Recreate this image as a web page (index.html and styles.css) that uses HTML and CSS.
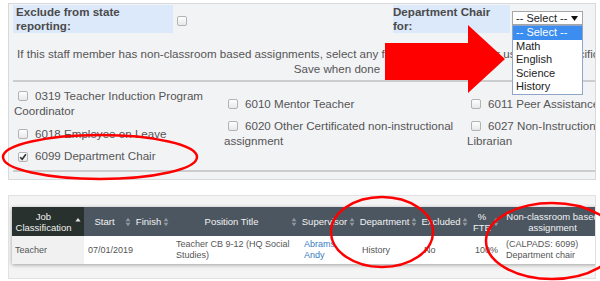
FILE: index.html
```html
<!DOCTYPE html>
<html>
<head>
<meta charset="utf-8">
<link rel="stylesheet" href="styles.css">
</head>
<body>
<div class="page">
  <section class="panel panel-top">
    <div class="panel-inner">
      <div class="form-row">
        <div class="lbl lbl-excl">Exclude from state reporting:</div>
        <div class="fld fld-excl"><span class="cb"></span></div>
        <div class="lbl lbl-dept">Department Chair for:</div>
        <div class="fld fld-dept">
          <div class="select"><span>-- Select --</span><svg class="caret" width="7" height="5" viewBox="0 0 7 5"><path d="M0 0H7L3.5 5Z" fill="#111"/></svg></div>
          <ul class="dropdown">
            <li class="active">-- Select --</li>
            <li>Math</li>
            <li>English</li>
            <li>Science</li>
            <li>History</li>
          </ul>
        </div>
      </div>
      <div class="info">
        <div class="info-l1">If this staff member has non-classroom based assignments, select any from the lists. Consider using their specific</div>
        <div class="info-l2">Save when done</div>
      </div>
      <div class="rule"></div>
      <div class="assign-grid">
        <div class="item"><span class="cb"></span>0319 Teacher Induction Program Coordinator</div>
        <div class="item"><span class="cb"></span>6010 Mentor Teacher</div>
        <div class="item"><span class="cb"></span>6011 Peer Assistance</div>
        <div class="item"><span class="cb"></span>6018 Employee on Leave</div>
        <div class="item"><span class="cb"></span>6020 Other Certificated non-instructional assignment</div>
        <div class="item"><span class="cb"></span>6027 Non-Instructional Librarian</div>
        <div class="item"><span class="cb checked"><svg width="8" height="8" viewBox="0 0 8 8"><path d="M1.2 4.2L3.2 6.3L6.9 1.2" fill="none" stroke="#333" stroke-width="1.6"/></svg></span>6099 Department Chair</div>
      </div>
      <div class="rule rule-bottom"></div>
    </div>
  </section>

  <section class="panel panel-table">
    <table class="grid-table">
      <colgroup>
        <col class="c-job"><col class="c-start"><col class="c-finish"><col class="c-pos"><col class="c-sup"><col class="c-dept"><col class="c-excl"><col class="c-fte"><col class="c-ncb">
      </colgroup>
      <thead>
        <tr>
          <th class="sorted"><div class="th-in"><span class="th-t">Job<br>Classification</span><svg class="si" width="6" height="10" viewBox="0 0 6 10"><path d="M3 1L5.6 4.4H0.4Z" fill="#e4e4e4"/></svg></div></th>
          <th><div class="th-in"><span class="th-t">Start</span><svg class="si" width="6" height="10" viewBox="0 0 6 10"><path d="M3 0.8L5.4 4.2H0.6Z" fill="#8e979f"/><path d="M3 9.2L5.4 5.8H0.6Z" fill="#8e979f"/></svg></div></th>
          <th><div class="th-in"><span class="th-t">Finish</span><svg class="si" width="6" height="10" viewBox="0 0 6 10"><path d="M3 0.8L5.4 4.2H0.6Z" fill="#8e979f"/><path d="M3 9.2L5.4 5.8H0.6Z" fill="#8e979f"/></svg></div></th>
          <th><div class="th-in"><span class="th-t">Position Title</span><svg class="si" width="6" height="10" viewBox="0 0 6 10"><path d="M3 0.8L5.4 4.2H0.6Z" fill="#8e979f"/><path d="M3 9.2L5.4 5.8H0.6Z" fill="#8e979f"/></svg></div></th>
          <th><div class="th-in"><span class="th-t">Supervisor</span><svg class="si" width="6" height="10" viewBox="0 0 6 10"><path d="M3 0.8L5.4 4.2H0.6Z" fill="#8e979f"/><path d="M3 9.2L5.4 5.8H0.6Z" fill="#8e979f"/></svg></div></th>
          <th><div class="th-in"><span class="th-t">Department</span><svg class="si" width="6" height="10" viewBox="0 0 6 10"><path d="M3 0.8L5.4 4.2H0.6Z" fill="#8e979f"/><path d="M3 9.2L5.4 5.8H0.6Z" fill="#8e979f"/></svg></div></th>
          <th><div class="th-in"><span class="th-t">Excluded</span><svg class="si" width="6" height="10" viewBox="0 0 6 10"><path d="M3 0.8L5.4 4.2H0.6Z" fill="#8e979f"/><path d="M3 9.2L5.4 5.8H0.6Z" fill="#8e979f"/></svg></div></th>
          <th><div class="th-in"><span class="th-t">% FTE</span><svg class="si" width="6" height="10" viewBox="0 0 6 10"><path d="M3 0.8L5.4 4.2H0.6Z" fill="#8e979f"/><path d="M3 9.2L5.4 5.8H0.6Z" fill="#8e979f"/></svg></div></th>
          <th><div class="th-in"><span class="th-t">Non-classroom based assignment</span><svg class="si" width="6" height="10" viewBox="0 0 6 10"><path d="M3 0.8L5.4 4.2H0.6Z" fill="#8e979f"/><path d="M3 9.2L5.4 5.8H0.6Z" fill="#8e979f"/></svg></div></th>
        </tr>
      </thead>
      <tbody>
        <tr>
          <td class="sorted">Teacher</td>
          <td>07/01/2019</td>
          <td></td>
          <td>Teacher CB 9-12 (HQ Social Studies)</td>
          <td><a class="sup-link" href="#">Abrams, Andy</a></td>
          <td>History</td>
          <td>No</td>
          <td>100%</td>
          <td>(CALPADS: 6099) Department chair</td>
        </tr>
      </tbody>
    </table>
  </section>

  <svg class="annot" width="600" height="281" viewBox="0 0 600 281">
    <polygon points="385,43 468,43 468,25 505,59 468,93 468,80 385,80" fill="#ff0000"/>
    <ellipse cx="100" cy="157" rx="97" ry="22" fill="none" stroke="#ff0000" stroke-width="2.5"/>
    <ellipse cx="382" cy="232" rx="51" ry="35" fill="none" stroke="#ff0000" stroke-width="2.5"/>
    <ellipse cx="552" cy="241" rx="66" ry="38" fill="none" stroke="#ff0000" stroke-width="2.5"/>
  </svg>
</div>
</body>
</html>
```

FILE: styles.css
```css
* { box-sizing: border-box; }
html, body { margin: 0; padding: 0; background: #fff; }
body {
  font-family: "Liberation Sans", Arial, sans-serif;
  width: 600px;
  height: 281px;
  overflow: hidden;
}
.page { position: relative; padding: 3px 0 0 8px; }
.panel { width: 588px; overflow: hidden; }

/* top panel */
.panel-top {
  border: 1px solid #d8d9db;
  background: #f2f3f5;
  padding: 1px 0 7px 4px;
}
.panel-inner { width: 648px; }
.form-row { display: flex; align-items: flex-start; height: 28px; }
.lbl {
  height: 28px;
  background: #dce9fa;
  font-weight: bold;
  font-size: 11.6px;
  line-height: 14px;
  color: #4a4a4a;
}
.lbl-excl { width: 160px; padding-left: 3px; }
.fld-excl { width: 220px; padding: 7px 0 0 4px; }
.lbl-dept { width: 117px; }
.fld-dept { position: relative; padding: 6px 0 0 2px; }
.select {
  width: 71px;
  height: 14px;
  border: 1px solid #a6a6a6;
  background: #fff;
  display: flex;
  align-items: center;
  justify-content: space-between;
  padding: 0 4px 0 3px;
  font-size: 11px;
  color: #222;
}
.dropdown {
  position: absolute;
  left: 2px;
  top: 20px;
  z-index: 2;
  width: 71px;
  margin: 0;
  padding: 0;
  list-style: none;
  border: 1px solid #8fa6c8;
  background: #fff;
  font-size: 11px;
  line-height: 13.6px;
  color: #222;
}
.dropdown li { padding-left: 3px; }
.dropdown li.active { background: #3c8df0; color: #fff; }

.info { margin-top: 13px; font-size: 11.6px; line-height: 15px; color: #555; }
.info-l1 { white-space: nowrap; padding-left: 4px; }
.info-l2 { text-align: center; }

.rule { height: 2px; background: #cbcccd; margin-top: 4px; }
.rule-bottom { margin-top: 7px; }

.assign-grid {
  display: grid;
  grid-template-columns: 210px 243px 150px;
  align-items: center;
  margin-top: 6px;
  padding-left: 1px;
  font-size: 11.6px;
  line-height: 15px;
  color: #555;
}
.cb {
  display: inline-flex;
  align-items: center;
  justify-content: center;
  width: 10px;
  height: 10px;
  border: 1px solid #b3b3b3;
  border-radius: 2px;
  background: linear-gradient(#fefefe, #e8e8e8);
}
.item .cb { margin: 0 7px 0 4px; vertical-align: -1px; }

/* table panel */
.panel-table {
  margin-top: 15px;
  border: 1px solid #e1e1e1;
  background: #f4f4f4;
  padding: 11px 0 14px 3px;
}
.grid-table {
  width: 600px;
  border-collapse: collapse;
  table-layout: fixed;
  box-shadow: 0 1px 4px rgba(0, 0, 0, 0.35);
}
.c-job { width: 72px; }
.c-start { width: 50px; }
.c-finish { width: 38px; }
.c-pos { width: 128px; }
.c-sup { width: 58px; }
.c-dept { width: 62px; }
.c-excl { width: 51px; }
.c-fte { width: 31px; }
.c-ncb { width: 110px; }

th {
  height: 29px;
  padding: 0;
  background: #4b5661;
  color: #f2f2f2;
  font-weight: normal;
  font-size: 9.5px;
  line-height: 11px;
}
th.sorted { background: #28312d; }
.th-in { display: flex; align-items: center; }
.th-t { flex: 1; text-align: center; }
.si { flex: none; margin-right: 3px; }

td {
  height: 28px;
  padding: 0 3px 0 4px;
  font-size: 9px;
  line-height: 11px;
  color: #555;
  background: #fff;
  vertical-align: middle;
}
td.sorted { background: #f1f1f1; padding-left: 3px; }
.sup-link { color: #3a7cc3; text-decoration: none; }

.annot { position: absolute; left: 0; top: 0; z-index: 5; }
```
